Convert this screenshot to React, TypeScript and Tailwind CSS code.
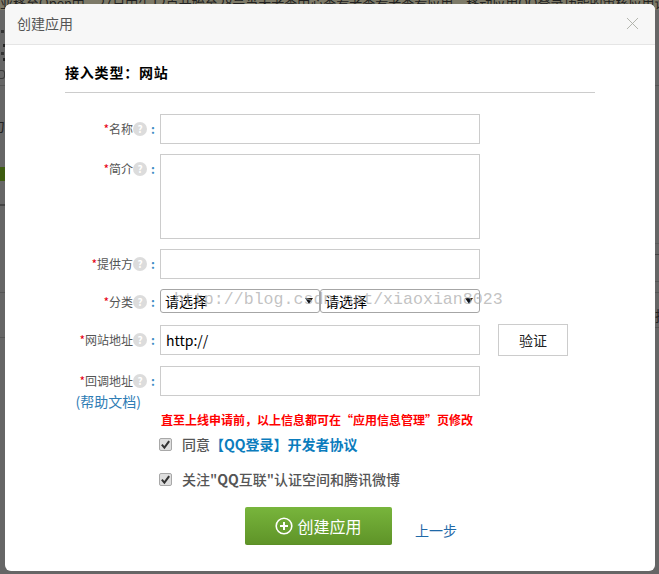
import React from "react";
import { X } from "lucide-react";

const font = { fontFamily: '"Noto Sans CJK SC", "Liberation Sans", sans-serif' };

function Label({ text, top = "pt-[6px]" }: { text: string; top?: string }) {
  return (
    <div className={`flex items-center justify-end h-[24px] text-[12px] leading-[16px] text-[#555] ${top}`}>
      <span className="text-[#e60012]">*</span>
      <span>{text}</span>
      <span className="flex h-[14px] w-[14px] items-center justify-center rounded-full bg-[#dcdcdc] text-[10px] font-bold leading-none text-white">
        ?
      </span>
      <span className="ml-[4px] w-[9px] font-bold text-[#3d8cc4]">:</span>
    </div>
  );
}

function CheckBox() {
  return (
    <span className="flex h-[13px] w-[13px] shrink-0 items-center justify-center rounded-[2px] border border-[#a8a8a8] bg-[#dedede]">
      <svg viewBox="0 0 12 12" className="h-[11px] w-[11px]">
        <path d="M2 6.2 L4.8 9.4 L10 2.4" fill="none" stroke="#333" strokeWidth="2.2" />
      </svg>
    </span>
  );
}

function Select() {
  return (
    <div className="relative w-[160px]">
      <select className="block h-[24px] w-full appearance-none rounded-[3px] border border-[#a6a6a6] bg-white pl-[4px] text-[14px] leading-[20px] text-black">
        <option>请选择</option>
      </select>
      <svg viewBox="0 0 8 6" className="absolute right-[7px] top-[9px] h-[6px] w-[8px]">
        <path d="M0 0 H8 L4 6 Z" fill="#111" />
      </svg>
    </div>
  );
}

export default function App() {
  return (
    <div className="relative h-[574px] w-[659px] overflow-hidden bg-[#666666] pl-[5px] pt-[4px]" style={font}>
      {/* page dimmed behind the dialog */}
      <div className="absolute left-0 right-0 top-0 h-[10px] overflow-hidden bg-[#7d7a68] text-[13px] leading-[6px] text-[#222]">
        <div className="whitespace-nowrap">业移至Open中，27日中午12点开始至28号当天者查中心查看者查看者查看应用，移动应用QQ登录功能的审核应用请到GDC</div>
      </div>
      <div className="absolute left-[1px] top-[30px] h-[3px] w-[3px] bg-[#333]" />
      <div className="absolute left-[3px] top-[44px] h-[3px] w-[2px] bg-[#222]" />
      <div className="absolute left-[1px] top-[52px] h-[3px] w-[3px] bg-[#333]" />
      <div className="absolute left-[3px] top-[58px] h-[3px] w-[2px] bg-[#222]" />
      <div className="absolute left-0 top-[70px] h-[9px] w-[5px] rounded-r-[3px] border border-l-0 border-[#3a3a3a]" />
      <div className="absolute left-0 top-[85px] h-px w-[5px] bg-[#555]" />
      <div className="absolute left-0 top-[167px] h-[14px] w-[5px] bg-[#3d5c10]" />
      <div className="absolute left-0 top-[204px] h-[2px] w-[5px] bg-[#444]" />
      <div className="absolute left-0 top-[292px] h-px w-[5px] bg-[#555]" />
      <div className="absolute left-0 top-[337px] h-px w-[5px] bg-[#555]" />
      <div className="absolute -left-[9px] top-[116px] text-[14px] leading-[18px] text-[#222]">力</div>
      <div className="absolute right-0 top-[85px] h-px w-[4px] bg-[#555]" />
      <div className="absolute right-0 top-[243px] h-px w-[4px] bg-[#5a5a5a]" />
      <div className="absolute right-0 top-[254px] h-px w-[4px] bg-[#444]" />
      <div className="absolute right-0 top-[281px] h-px w-[4px] bg-[#555]" />
      <div className="absolute right-0 top-[292px] h-px w-[4px] bg-[#555]" />
      <div className="absolute right-0 top-[327px] h-px w-[4px] bg-[#555]" />
      <div className="absolute left-[655px] top-[306px] text-[14px] leading-[18px] text-[#222]">拍</div>

      <div className="relative h-[567px] w-[650px] overflow-hidden rounded-[6px] bg-white">
        <div className="flex h-[41px] items-center justify-between border-b border-[#e5e5e5] bg-[#f7f7f7] pb-[2px] pl-[12px] pr-[12px]">
          <span className="text-[14px] text-[#555]">创建应用</span>
          <X size={21} strokeWidth={1} className="text-[#a9aba3]" />
        </div>

        <div className="px-[60px]">
          <h2 className="flex h-[48px] items-center border-b border-[#cccccc] pt-[8px] text-[14px] font-bold tracking-[0.8px] text-black">
            接入类型：网站
          </h2>

          <div className="mt-[21px] flex flex-col gap-[10px]">
            <div className="flex">
              <div className="w-[95px]"><Label text="名称" /></div>
              <input className="h-[30px] w-[320px] border border-[#cccccc]" />
            </div>
            <div className="flex">
              <div className="w-[95px]"><Label text="简介" /></div>
              <textarea className="h-[85px] w-[320px] resize-none border border-[#cccccc]" />
            </div>
            <div className="flex">
              <div className="w-[95px]"><Label text="提供方" /></div>
              <input className="h-[30px] w-[320px] border border-[#cccccc]" />
            </div>
            <div className="flex">
              <div className="w-[95px]"><Label text="分类" top="pt-[2px]" /></div>
              <div className="flex w-[320px]">
                <Select />
                <Select />
              </div>
            </div>
            <div className="mt-px flex items-center">
              <div className="w-[95px]"><Label text="网站地址" top="pt-0" /></div>
              <input
                defaultValue="http://"
                className="h-[30px] w-[320px] border border-[#cccccc] px-[5px] text-[14px] text-black"
              />
              <button className="ml-[18px] h-[32px] w-[70px] border border-[#cccccc] bg-white text-[14px] text-[#222]">
                验证
              </button>
            </div>
            <div className="flex">
              <div className="w-[95px]">
                <Label text="回调地址" />
                <div className="-ml-[2px] mt-[2px] pr-[19px] text-right text-[14px] leading-[18px] text-[#2f7db5]">(帮助文档)</div>
              </div>
              <div>
                <input className="h-[30px] w-[320px] border border-[#cccccc]" />
                <p className="mt-[16px] pl-px text-[12px] font-bold leading-[16px] text-[#ff0000]">
                  直至上线申请前，以上信息都可在“应用信息管理”页修改
                </p>
              </div>
            </div>
          </div>

          <div className="ml-[94px] mt-[7px] flex flex-col gap-[17px] text-[14px] leading-[18px] text-[#555]">
            <div className="flex items-center gap-[10px]">
              <CheckBox />
              <span className="font-medium">
                同意<a className="font-bold text-[#0b7cbd]">【QQ登录】开发者协议</a>
              </span>
            </div>
            <div className="flex items-center gap-[10px]">
              <CheckBox />
              <span className="font-medium">
                关注"<b>QQ</b>互联"认证空间和腾讯微博
              </span>
            </div>
          </div>

          <div className="ml-[180px] mt-[19px] flex items-center">
            <button className="flex h-[38px] w-[147px] items-center justify-center gap-[4px] rounded-[2px] border-b border-[#5c8f26] bg-gradient-to-b from-[#78b53c] to-[#5f9428] text-[16px] text-white">
              <svg viewBox="0 0 18 18" className="h-[18px] w-[18px]">
                <circle cx="9" cy="9" r="7.8" fill="none" stroke="white" strokeWidth="1.6" />
                <path d="M9 5 V13 M5 9 H13" stroke="white" strokeWidth="2" />
              </svg>
              创建应用
            </button>
            <a className="ml-[23px] mt-[9px] text-[14px] text-[#1f69a8]">上一步</a>
          </div>
        </div>
      </div>

      <div className="absolute left-[174px] top-[289px] whitespace-nowrap text-[16.6px] leading-[22px] text-[#a8a8a8]/70" style={{ fontFamily: '"Liberation Mono", monospace' }}>
        http://blog.csdn.net/xiaoxian8023
      </div>
    </div>
  );
}
